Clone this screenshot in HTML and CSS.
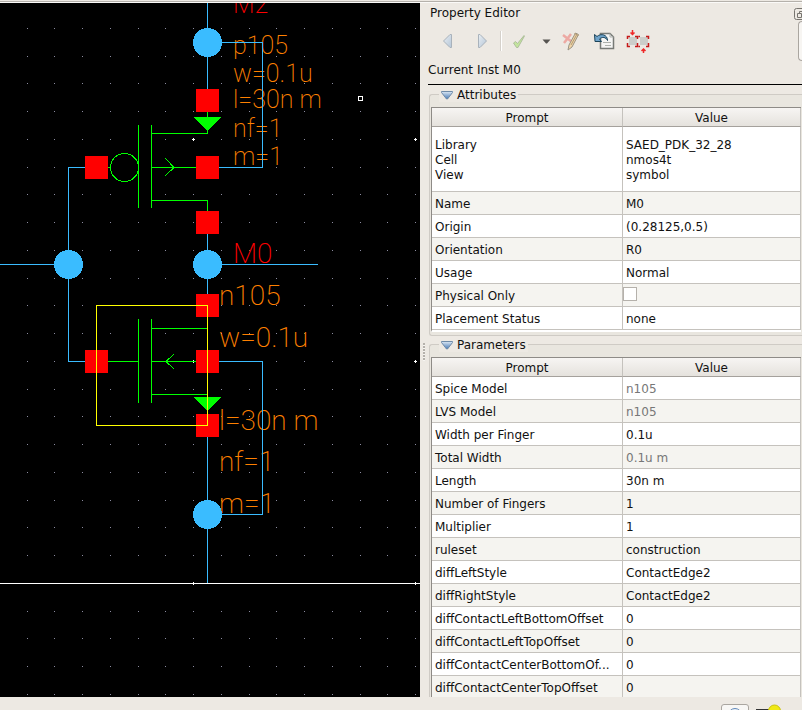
FILE: index.html
```html
<!DOCTYPE html>
<html lang="en">
<head>
<meta charset="utf-8">
<title>Schematic Editor</title>
<link rel="stylesheet" href="styles.css">
</head>
<body>
<div class="app">
  <div class="top-edge"></div>
  <main class="workspace">
    <section class="canvas">
      <svg class="schematic" role="img" aria-label="Inverter schematic">
        <defs>
          <pattern id="grid" x="27" y="25" width="111" height="111" patternUnits="userSpaceOnUse">
            <path class="dot" d="M0 0h1v1h-1zM27 0h1v1h-1zM55 0h1v1h-1zM83 0h1v1h-1zM0 28h1v1h-1zM27 28h1v1h-1zM55 28h1v1h-1zM83 28h1v1h-1zM0 55h1v1h-1zM27 55h1v1h-1zM55 55h1v1h-1zM83 55h1v1h-1zM0 83h1v1h-1zM27 83h1v1h-1zM55 83h1v1h-1zM83 83h1v1h-1z"/>
          </pattern>
          <pattern id="major" x="192" y="135" width="222" height="222" patternUnits="userSpaceOnUse">
            <path class="major" d="M1 0h1v3h-1zM0 1h3v1h-3z"/>
          </pattern>
        </defs>
        <rect width="100%" height="100%" fill="url(#grid)"/>
        <rect x="190" y="130" width="100%" height="100%" fill="url(#major)"/>
        <!-- Drawing coordinates start at the top of the window, 3px above the canvas -->
        <g transform="translate(0 -3)">
          <g class="label small">
            <text class="inst" x="233" y="13">M2</text>
            <text x="233" y="54">p105</text>
            <text x="233" y="82">w=0.1u</text>
            <text x="233" y="108">l=30n m</text>
            <text x="233" y="137">nf=1</text>
            <text x="233" y="165">m=1</text>
          </g>
          <g class="label large">
            <text class="inst" x="233" y="263">M0</text>
            <text x="219" y="305">n105</text>
            <text x="219" y="347">w=0.1u</text>
            <text x="219" y="430">l=30n m</text>
            <text x="219" y="471">nf=1</text>
            <text x="219" y="513">m=1</text>
          </g>
          <path class="wire" d="M207.500 3V583M85 167.500H68.500V361.500H85M0 264.500H54M222 264.500H318M222 42.500H262.500V167.500H219M219 361.500H262.500V514.500H222"/>
          <path class="axis" d="M0 583.500H4000"/>
          <g class="node">
            <circle cx="207.500" cy="42.500" r="14.500"/>
            <circle cx="68.500" cy="264.500" r="14.500"/>
            <circle cx="207.500" cy="264.500" r="14.500"/>
            <circle cx="207.500" cy="514.500" r="14.500"/>
          </g>
          <path class="gap" d="M207.500 134V200M207.500 317V350"/>
          <g class="device">
            <path d="M138.500 125V208M151.500 125V208M151 133.500H207.500V112M108 167.500H110M151 167.500H196M151 200.500H207.500V211M138.500 319V403M151.500 319V403M151 328.500H207M108 361.500H138M151 361.500H196M151 394.500H207"/>
            <circle cx="124.500" cy="167.500" r="14"/>
            <path d="M165 158L174 167.500L165 176M174 354L166 361.500L174 369"/>
            <path class="solid" d="M193 117H221.500L207.500 131.500ZM193 397H221.500L207.500 411.500Z"/>
          </g>
          <path class="pin" d="M196 89h23v23h-23zM196 156h23v23h-23zM196 211h23v23h-23zM196 294h23v23h-23zM196 350h23v23h-23zM196 414h23v23h-23zM85 156h23v23h-23zM85 350h23v23h-23z"/>
          <path class="selection" d="M96.500 305.500H207.500V425.500H96.500Z"/>
          <path class="cursor" d="M358.500 96.500h4v4h-4z"/>
        </g>
      </svg>
    </section>
    <div class="splitter"><i class="grip"></i></div>
    <aside class="panel">
      <header class="titlebar">
        <h1>Property Editor</h1>
        <button class="float" aria-label="Float panel"><svg width="12" height="12" viewBox="0 0 12 12"><rect x=".5" y=".5" width="11" height="11" rx="2"/><path d="M5.500 5.500V3.500H9.500V7.500H7.500M3.500 5.500H7.500V9.500H3.500Z"/></svg></button>
      </header>
      <div class="toolbar">
        <button aria-label="Previous"><svg width="24" height="24" viewBox="0 0 24 24"><defs><linearGradient id="pale" x2="1" y2="1"><stop stop-color="#e9eef2"/><stop offset="1" stop-color="#b5c6d8"/></linearGradient></defs><path d="M15.500 5.500V18.500H14L7.500 12L14 5.500Z" fill="url(#pale)" stroke="#a9b2bb"/></svg></button>
        <button aria-label="Next"><svg width="24" height="24" viewBox="0 0 24 24"><path d="M7.500 5.500V18.500H9L15.500 12L9 5.500Z" fill="url(#pale)" stroke="#a9b2bb"/></svg></button>
        <i class="sep"></i>
        <button aria-label="Apply"><svg width="24" height="24" viewBox="0 0 24 24"><path d="M6.500 14L8.500 12.500L10.500 14.500L17 6.500L17.500 7L11 18.500H9.500Z" fill="#c3e49d" stroke="#a4b596" stroke-width=".8"/></svg></button>
        <button class="drop" aria-label="Apply options"><svg width="9" height="5" viewBox="0 0 9 5"><path d="M.5 .5H8.500L5 4.500H4Z" fill="#565451"/></svg></button>
        <button class="clear" aria-label="Discard edits"><svg width="24" height="24" viewBox="0 0 24 24"><path d="M4 6L13 13M12 5L5 14" stroke="#eda9a3" stroke-width="2.500"/><path d="M9 21L10 16L16.500 4L19.500 5.500L13 18Z" fill="#f0d4a5" stroke="#9c9484"/><path d="M12 16L17.500 6M15.500 4.500L19.500 6.500" stroke="#b39c76" fill="none"/></svg></button>
        <button class="undo" aria-label="Revert"><svg width="24" height="24" viewBox="0 0 24 24"><path d="M8.500 4.500H18L21.500 8V19.500H8.500Z" fill="#f5f5f4" stroke="#777a76" stroke-width="1.500"/><path d="M18 4.500V8H21.500M11 13.500H19M13 16.500H19" stroke="#adb0ac" fill="none"/><path d="M2.500 5.500L3 12.500H9.500L7.500 10C10 7.500 14 8 15.500 11.500C15.500 5.500 9 4 5 7.500Z" fill="#6fa3ca" stroke="#1c4358"/></svg></button>
        <button class="align" aria-label="Abut"><svg width="24" height="24" viewBox="0 0 24 24"><path d="M3 8h8v8H3zM14 8h8v8h-8z" fill="#ccceca"/><path d="M1.500 10V7.500H4M1.500 14V17.500H4M9 7.500H11.500V10M14 7.500H12.500M9 17.500H11.500V14M14 17.500H12.500M20 7.500H22.500V10M20 17.500H22.500V14" fill="none" stroke="#c51a1a" stroke-width="1.500"/><path d="M6.500 1V5M4.500 3.500L6.500 5.500L8.500 3.500M17.500 24V20M15.500 22L17.500 20L19.500 22" fill="none" stroke="#ef2929" stroke-width="1.500"/></svg></button>
        <i class="scroller"></i>
      </div>
      <p class="current">Current Inst M0</p>
      <div class="groups">
        <fieldset class="group">
          <legend><button class="toggle"><svg width="12" height="9" viewBox="0 0 12 9"><defs><linearGradient id="tri" x2="0" y2="1"><stop stop-color="#dce8f4"/><stop offset="1" stop-color="#4779b4"/></linearGradient></defs><path d="M.500 .500H11.500V1.500L6.500 8H5.500L.500 1.500Z" fill="url(#tri)" stroke="#6f8ba8"/></svg><span>Attributes</span></button></legend>
          <table>
            <thead><tr><th scope="col">Prompt</th><th scope="col">Value</th></tr></thead>
            <tbody>
              <tr class="tall"><td>Library<br>Cell<br>View</td><td>SAED_PDK_32_28<br>nmos4t<br>symbol</td></tr>
              <tr><td>Name</td><td>M0</td></tr>
              <tr><td>Origin</td><td>(0.28125,0.5)</td></tr>
              <tr><td>Orientation</td><td>R0</td></tr>
              <tr><td>Usage</td><td>Normal</td></tr>
              <tr><td><label for="physical">Physical Only</label></td><td class="check"><input type="checkbox" id="physical"></td></tr>
              <tr><td>Placement Status</td><td>none</td></tr>
            </tbody>
          </table>
        </fieldset>
        <fieldset class="group">
          <legend><button class="toggle"><svg width="12" height="9" viewBox="0 0 12 9"><path d="M.500 .500H11.500V1.500L6.500 8H5.500L.500 1.500Z" fill="url(#tri)" stroke="#6f8ba8"/></svg><span>Parameters</span></button></legend>
          <table>
            <thead><tr><th scope="col">Prompt</th><th scope="col">Value</th></tr></thead>
            <tbody>
              <tr><td>Spice Model</td><td class="muted">n105</td></tr>
              <tr><td>LVS Model</td><td class="muted">n105</td></tr>
              <tr><td>Width per Finger</td><td>0.1u</td></tr>
              <tr><td>Total Width</td><td class="muted">0.1u m</td></tr>
              <tr><td>Length</td><td>30n m</td></tr>
              <tr><td>Number of Fingers</td><td>1</td></tr>
              <tr><td>Multiplier</td><td>1</td></tr>
              <tr><td>ruleset</td><td>construction</td></tr>
              <tr><td>diffLeftStyle</td><td>ContactEdge2</td></tr>
              <tr><td>diffRightStyle</td><td>ContactEdge2</td></tr>
              <tr><td>diffContactLeftBottomOffset</td><td>0</td></tr>
              <tr><td>diffContactLeftTopOffset</td><td>0</td></tr>
              <tr><td>diffContactCenterBottomOf...</td><td>0</td></tr>
              <tr><td>diffContactCenterTopOffset</td><td>0</td></tr>
            </tbody>
          </table>
        </fieldset>
      </div>
    </aside>
  </main>
  <footer class="statusbar">
    <button class="status-button" aria-label="Search"><svg width="26" height="12" viewBox="0 0 26 12"><circle cx="13" cy="9" r="6.500" fill="#eef3f8" stroke="#5f87b8"/><path d="M9 8Q13 3 17 8" fill="none" stroke="#5f87b8"/></svg></button>
    <svg class="lamp" width="26" height="10" viewBox="0 0 26 10"><path d="M0 5H16V8H0Z" fill="#333"/><circle cx="18.500" cy="7" r="6" fill="#f0e916" stroke="#c9c20c"/></svg>
  </footer>
</div>
</body>
</html>
```
FILE: styles.css
```css
* { box-sizing: border-box; }

body {
  margin: 0;
  background: #ede9e3;
  color: #111;
  font: 12px/15px "DejaVu Sans", sans-serif;
}

button {
  padding: 0;
  border: 0;
  background: none;
  color: inherit;
  font: inherit;
}

svg { display: block; }

.app {
  display: grid;
  grid-template-rows: 3px minmax(0, 1fr) 13px;
  height: 100vh;
  overflow: hidden;
}

.top-edge {
  border-top: 1px solid #ede9e3;
  border-bottom: 1px solid #fbfaf8;
  background: #b5b1ab;
}

.workspace {
  display: grid;
  grid-template-columns: minmax(0, 1fr) 8px 374px;
  min-height: 0;
}

/* Schematic canvas */
.canvas { background: #000; overflow: hidden; }

.schematic {
  width: 100%;
  height: 100%;
  shape-rendering: crispEdges;
}

.dot { fill: #8c8ca0; }
.major { fill: #fff; }
.wire, .axis, .gap, .selection, .cursor, .device { fill: none; stroke-width: 1px; }
.wire { stroke: #3abcff; }
.axis { stroke: #fff; }
.gap { stroke: #000; }
.node { fill: #3abcff; }
.device { stroke: #0f0; }
.solid { fill: #0f0; stroke: none; }
.pin { fill: #f00; }
.selection { stroke: #ff0; }
.cursor { stroke: #fff; }

.label {
  fill: #ff8000;
  font-family: Roboto, sans-serif;
  font-weight: 200;
}

.small { font-size: 25px; }
.large { font-size: 28px; }
.label .inst { fill: #f00; }

/* Splitter */
.splitter {
  display: flex;
  align-items: center;
  justify-content: center;
  padding-top: 3px;
}

.grip {
  width: 2px;
  height: 18px;
  background: repeating-linear-gradient(#b5b1ab 0 2px, #f7f5f2 2px 3px);
}

/* Property panel */
.panel {
  display: flex;
  flex-direction: column;
  min-height: 0;
  overflow: hidden;
}

.titlebar {
  display: flex;
  justify-content: space-between;
  height: 20px;
  padding: 3px 0 0 2px;
}

.titlebar h1 { margin: 0; font-size: 12px; font-weight: 400; }

.float {
  flex: none;
  width: 8px;
  height: 15px;
  overflow: hidden;
}

.float svg { fill: none; stroke: #77746f; }

.toolbar {
  display: flex;
  align-items: center;
  height: 36px;
  padding-left: 8px;
}

.toolbar button { flex: none; margin-right: 11px; }

.sep {
  width: 2px;
  height: 20px;
  margin: 0 5px 0 -6px;
  border-left: 1px solid #d5d1cb;
  background: #fff;
}

.toolbar .drop { margin-right: 8px; }
.toolbar .undo { margin: 0 10px 0 -2px; }

.scroller {
  width: 4px;
  height: 40px;
  margin-left: auto;
  border: 1px solid #aaa6a0;
  border-right: 0;
  border-radius: 4px 0 0 4px;
  background: #f7f5f2;
}

.current {
  height: 26px;
  margin: 0;
  padding-top: 4px;
  border-bottom: 1px solid #000;
}

.groups {
  flex: 1;
  min-height: 0;
  overflow: hidden;
}

.group {
  min-width: 0;
  margin: 2px 0 0 1px;
  padding: 5px 1px 3px 1px;
  border: 1px solid #cfcbc5;
  border-right: 0;
  border-radius: 3px 0 0 3px;
  background: #e9e6df;
}

.group + .group { margin-top: 1px; }

.group legend {
  height: 15px;
  margin-left: 8px;
  padding: 0 2px;
  background: #ede9e3;
}

.toggle { display: flex; align-items: center; gap: 4px; }
.toggle span { padding-top: 1px; }

table {
  width: 100%;
  table-layout: fixed;
  border-spacing: 0;
  border-left: 1px solid #8e8b87;
  border-top: 1px solid #8e8b87;
  border-bottom: 2px solid #fff;
}

th {
  width: 191px;
  height: 19px;
  padding: 2px 0 0;
  border-right: 1px solid #c5c2bd;
  border-bottom: 1px solid #a5a19c;
  background: linear-gradient(#f7f5f3, #e5e2dd);
  font-weight: 400;
}

th + th { width: auto; }

td {
  height: 23px;
  padding: 2px 3px 0;
  border-right: 1px solid #c5c2bd;
  border-bottom: 1px solid #c5c2bd;
  background: #fff;
  white-space: nowrap;
}

tr:nth-child(even) td { background: #f5f4f0; }
.tall td { height: 65px; }
.muted { color: #777; }
.check { padding: 0; vertical-align: top; }

.check input {
  display: block;
  appearance: none;
  width: 14px;
  height: 14px;
  margin: 3px 0 0;
  border: 1px solid #b5b1ab;
  background: #fff;
}

/* Status bar */
.statusbar {
  display: flex;
  justify-content: flex-end;
  gap: 7px;
  padding: 7px 20px 0 0;
  overflow: hidden;
}

.status-button {
  width: 28px;
  height: 16px;
  overflow: hidden;
  border: 1px solid #aaa6a0;
  border-radius: 3px;
  background: #f8f7f5;
}

.lamp { overflow: hidden; }
```
